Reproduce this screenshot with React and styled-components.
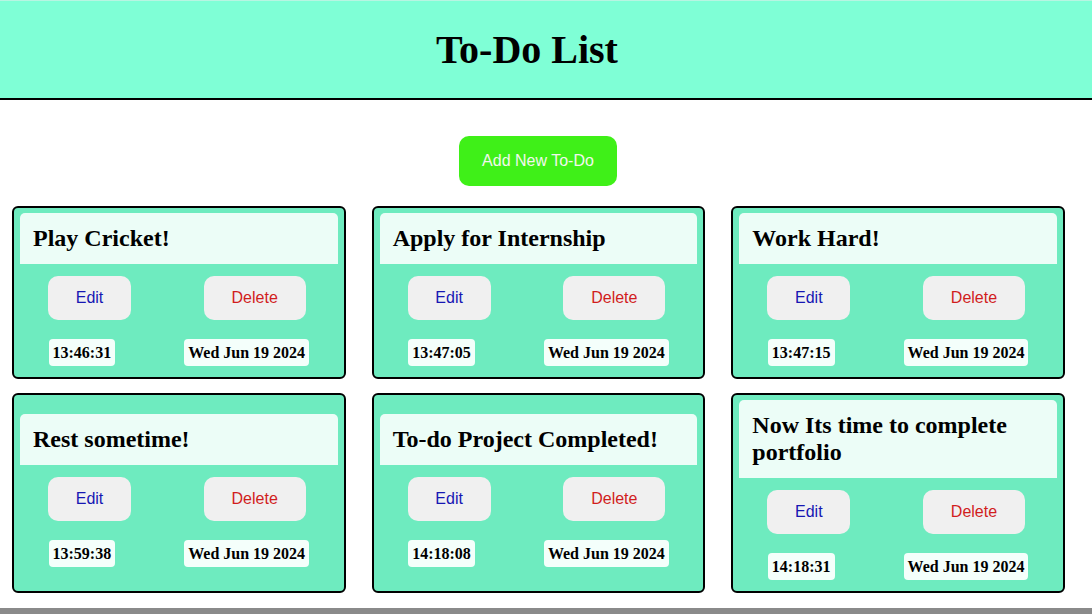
import React from "react";
import styled, { createGlobalStyle } from "styled-components";

const Global = createGlobalStyle`
  html, body { margin: 0; padding: 0; background: #ffffff; }
  body { font-family: "Liberation Serif", "Times New Roman", serif; }
  * { box-sizing: border-box; }
`;

const Page = styled.div`
  display: flex;
  flex-direction: column;
  width: 1092px;
  min-height: 614px;
`;

const Header = styled.header`
  height: 100px;
  background: #7fffd6;
  border-top: 1px solid #b8f5e2;
  border-bottom: 2px solid #000;
  display: flex;
  align-items: center;
  justify-content: center;
  padding-right: 38px;
`;

const Title = styled.h1`
  margin: 0;
  font-family: "Liberation Serif", "Times New Roman", serif;
  font-weight: 700;
  font-size: 40px;
  color: #000;
`;

const AddRow = styled.div`
  display: flex;
  justify-content: center;
  padding: 36px 16px 20px 0;
`;

const AddButton = styled.button`
  font-family: "Liberation Sans", Arial, sans-serif;
  font-size: 16px;
  color: #f2f7ee;
  background: #3ff018;
  border: none;
  border-radius: 10px;
  width: 158px;
  height: 50px;
  padding: 0;
`;

const Grid = styled.div`
  display: grid;
  grid-template-columns: repeat(3, 1fr);
  column-gap: 26px;
  row-gap: 14px;
  padding: 0 27px 0 12px;
`;

const Card = styled.div`
  background: #6eebbf;
  border: 2px solid #000;
  border-radius: 6px;
  display: flex;
  flex-direction: column;
  justify-content: center;
  padding: 5px 0 11px;
`;

const TitleBox = styled.div`
  margin: 0 6px;
  background: #ecfdf7;
  border-radius: 5px 5px 0 0;
  padding: 12px 13px;
`;

const TodoTitle = styled.h2`
  margin: 0;
  font-family: "Liberation Serif", "Times New Roman", serif;
  font-weight: 700;
  font-size: 24px;
  color: #000;
`;

const ButtonRow = styled.div`
  display: flex;
  justify-content: space-between;
  padding: 0 38px 0 34px;
  margin-top: 12px;
`;

const ActionButton = styled.button`
  font-family: "Liberation Sans", Arial, sans-serif;
  font-size: 16px;
  color: ${(p) => (p.$danger ? "#d11d1d" : "#1717b3")};
  background: #f0f0f0;
  border: none;
  border-radius: 10px;
  height: 44px;
  width: ${(p) => (p.$danger ? "102px" : "83px")};
  padding: 0;
`;

const StampRow = styled.div`
  display: flex;
  justify-content: space-around;
  margin-top: 19px;
`;

const Stamp = styled.span`
  font-family: "Liberation Serif", "Times New Roman", serif;
  font-weight: 700;
  font-size: 16px;
  color: #000;
  background: #f4fffb;
  border-radius: 4px;
  padding: 4px 4px;
  line-height: 19px;
`;

const Footer = styled.footer`
  margin-top: auto;
  height: 6px;
  background: #8a8a8a;
`;

const todos = [
  { title: "Play Cricket!", time: "13:46:31" },
  { title: "Apply for Internship", time: "13:47:05" },
  { title: "Work Hard!", time: "13:47:15" },
  { title: "Rest sometime!", time: "13:59:38" },
  { title: "To-do Project Completed!", time: "14:18:08" },
  { title: "Now Its time to complete portfolio", time: "14:18:31" },
];

export default function App() {
  return (
    <Page>
      <Global />
      <Header>
        <Title>To-Do List</Title>
      </Header>
      <AddRow>
        <AddButton>Add New To-Do</AddButton>
      </AddRow>
      <Grid>
        {todos.map((t) => (
          <Card key={t.time}>
            <TitleBox>
              <TodoTitle>{t.title}</TodoTitle>
            </TitleBox>
            <ButtonRow>
              <ActionButton>Edit</ActionButton>
              <ActionButton $danger>Delete</ActionButton>
            </ButtonRow>
            <StampRow>
              <Stamp>{t.time}</Stamp>
              <Stamp>Wed Jun 19 2024</Stamp>
            </StampRow>
          </Card>
        ))}
      </Grid>
      <Footer />
    </Page>
  );
}
